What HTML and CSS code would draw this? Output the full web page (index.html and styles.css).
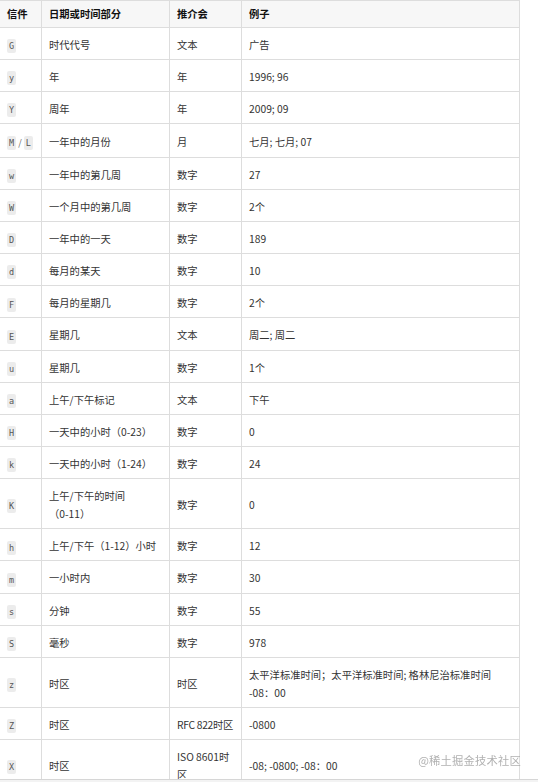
FILE: index.html
```html
<!DOCTYPE html>
<html lang="zh-CN">
<head>
<meta charset="utf-8">
<title>日期格式</title>
<link rel="stylesheet" href="styles.css">
</head>
<body>
<table class="fmt">
  <colgroup>
    <col class="c1"><col class="c2"><col class="c3"><col class="c4">
  </colgroup>
  <thead>
    <tr><th>信件</th><th>日期或时间部分</th><th>推介会</th><th>例子</th></tr>
  </thead>
  <tbody>
    <tr><td><code>G</code></td><td>时代代号</td><td>文本</td><td>广告</td></tr>
    <tr><td><code>y</code></td><td>年</td><td>年</td><td>1996; 96</td></tr>
    <tr><td><code>Y</code></td><td>周年</td><td>年</td><td>2009; 09</td></tr>
    <tr><td><code>M</code><span class="sep">/</span><code>L</code></td><td>一年中的月份</td><td>月</td><td>七月; 七月; 07</td></tr>
    <tr><td><code>w</code></td><td>一年中的第几周</td><td>数字</td><td>27</td></tr>
    <tr><td><code>W</code></td><td>一个月中的第几周</td><td>数字</td><td>2个</td></tr>
    <tr><td><code>D</code></td><td>一年中的一天</td><td>数字</td><td>189</td></tr>
    <tr><td><code>d</code></td><td>每月的某天</td><td>数字</td><td>10</td></tr>
    <tr><td><code>F</code></td><td>每月的星期几</td><td>数字</td><td>2个</td></tr>
    <tr><td><code>E</code></td><td>星期几</td><td>文本</td><td>周二; 周二</td></tr>
    <tr><td><code>u</code></td><td>星期几</td><td>数字</td><td>1个</td></tr>
    <tr><td><code>a</code></td><td>上午/下午标记</td><td>文本</td><td>下午</td></tr>
    <tr><td><code>H</code></td><td>一天中的小时（0-23）</td><td>数字</td><td>0</td></tr>
    <tr><td><code>k</code></td><td>一天中的小时（1-24）</td><td>数字</td><td>24</td></tr>
    <tr><td><code>K</code></td><td>上午/下午的时间<br>（0-11）</td><td>数字</td><td>0</td></tr>
    <tr><td><code>h</code></td><td>上午/下午（1-12）小时</td><td>数字</td><td>12</td></tr>
    <tr><td><code>m</code></td><td>一小时内</td><td>数字</td><td>30</td></tr>
    <tr><td><code>s</code></td><td>分钟</td><td>数字</td><td>55</td></tr>
    <tr><td><code>S</code></td><td>毫秒</td><td>数字</td><td>978</td></tr>
    <tr><td><code>z</code></td><td>时区</td><td>时区</td><td>太平洋标准时间；太平洋标准时间; 格林尼治标准时间<br>-08：00</td></tr>
    <tr><td><code>Z</code></td><td>时区</td><td class="nowrap">RFC 822时区</td><td>-0800</td></tr>
    <tr><td><code>X</code></td><td>时区</td><td>ISO 8601时<br>区</td><td>-08; -0800; -08：00</td></tr>
  </tbody>
</table>
<div class="watermark">@稀土掘金技术社区</div>
<div class="hbar"></div>
</body>
</html>
```

FILE: styles.css
```css
html, body {
  margin: 0;
  padding: 0;
  background: #ffffff;
}

body {
  font-family: "Noto Sans CJK SC", "Noto Sans", sans-serif;
  font-size: 10.3px;
  color: #333333;
}

.fmt {
  border-collapse: collapse;
  table-layout: fixed;
  width: 520px;
  margin-left: -1px;
}

.c1 { width: 42px; }
.c2 { width: 128px; }
.c3 { width: 72px; }
.c4 { width: 278px; }

.fmt th,
.fmt td {
  border: 1px solid #dddddd;
  line-height: 18px;
  text-align: left;
  vertical-align: middle;
  word-wrap: break-word;
}

.fmt th {
  background: #f7f7f7;
  color: #111111;
  font-weight: bold;
  padding: 4px 7px 4px 7px;
}

.fmt td {
  padding: 8px 7px 5.15px 7px;
}

.fmt td.nowrap {
  white-space: nowrap;
  letter-spacing: -0.3px;
}

.fmt code {
  display: inline-block;
  font-family: "DejaVu Sans Mono", monospace;
  font-size: 8.5px;
  line-height: 14px;
  padding: 0 2px;
  background: #ececec;
  color: #555555;
  border-radius: 2px;
  vertical-align: middle;
}

.sep {
  display: inline-block;
  margin: 0 2px;
  font-size: 9px;
  color: #666666;
  vertical-align: middle;
}

.watermark {
  position: fixed;
  right: 17px;
  bottom: 15px;
  font-size: 11.3px;
  line-height: 14px;
  color: rgba(150, 150, 150, 0.75);
  letter-spacing: 0.2px;
}

.hbar {
  position: fixed;
  left: 0;
  right: 0;
  bottom: 0;
  height: 2px;
  border-top: 1px solid #d6d6d6;
  background: #f3f3f3;
}
```
